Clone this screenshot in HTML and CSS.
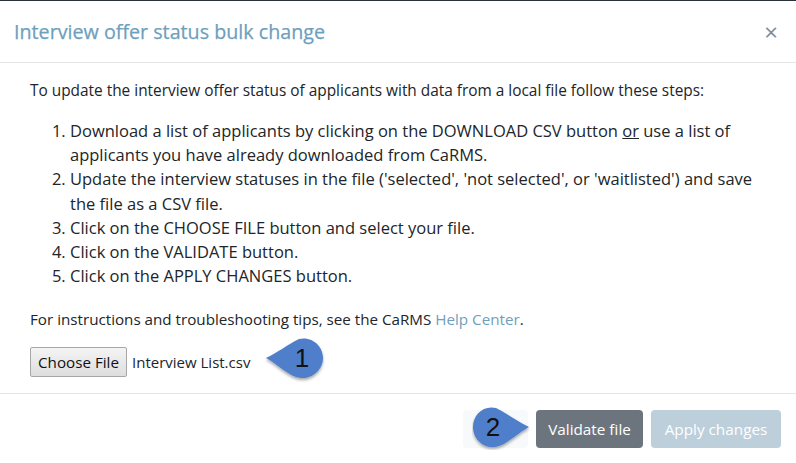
FILE: index.html
```html
<!DOCTYPE html>
<html>
<head>
    <title>Interview offer status bulk change</title>
    <link rel="stylesheet" href="styles.css">
</head>
<body>
    <div class="modal">
        <div class="modal-header">
            <h4 class="modal-title">Interview offer status bulk change</h4>
            <span class="close">&times;</span>
        </div>
        <div class="modal-body">
            <p class="intro">To update the interview offer status of applicants with data from a local file follow these steps:</p>
            <ol class="steps">
                <li>Download a list of applicants by clicking on the DOWNLOAD CSV button <u>or</u> use a list of applicants you have already downloaded from CaRMS.</li>
                <li>Update the interview statuses in the file ('selected', 'not selected', or 'waitlisted') and save the file as a CSV file.</li>
                <li>Click on the CHOOSE FILE button and select your file.</li>
                <li>Click on the VALIDATE button.</li>
                <li>Click on the APPLY CHANGES button.</li>
            </ol>
            <p class="help">For instructions and troubleshooting tips, see the CaRMS <a href="#">Help Center</a>.</p>
            <div class="file-row">
                <button class="file-btn">Choose File</button>
                <span class="file-name">Interview List.csv</span>
                <svg class="callout" width="60" height="46" viewBox="0 0 60 46">
                    <defs>
                        <filter id="sh1" x="-20%" y="-20%" width="140%" height="150%">
                            <feDropShadow dx="0" dy="2" stdDeviation="1.5" flood-color="#000" flood-opacity="0.35"/>
                        </filter>
                    </defs>
                    <path d="M1 21 C12 16 22 8 34 2 C47 -1 58 9 58 21 C58 33 47 42 36 41 C24 40 14 28 1 21 Z" fill="#4f7fca" filter="url(#sh1)"/>
                    <text x="37" y="30" class="callout-num">1</text>
                </svg>
            </div>
        </div>
        <div class="modal-footer">
            <div class="ghost">
                <svg class="callout callout-2" width="60" height="46" viewBox="0 0 60 46">
                    <defs>
                        <filter id="sh2" x="-20%" y="-20%" width="140%" height="150%">
                            <feDropShadow dx="0" dy="2" stdDeviation="1.5" flood-color="#000" flood-opacity="0.35"/>
                        </filter>
                    </defs>
                    <path d="M57 23 C46 18 36 10 24 4 C11 1 1 11 1 23 C1 35 11 44 22 43 C34 42 44 30 57 23 Z" fill="#4f7fca" filter="url(#sh2)"/>
                    <text x="21" y="32" class="callout-num">2</text>
                </svg>
            </div>
            <button class="btn btn-secondary">Validate file</button>
            <button class="btn btn-disabled">Apply changes</button>
        </div>
    </div>
</body>
</html>
```

FILE: styles.css
```css
body { margin: 0; background: #263238; font-family: "Open Sans", "Noto Sans", sans-serif; color: #212529; }
.modal { margin-top: 1px; background: #fff; width: 796px; height: 462px; }
.modal-header { display: flex; align-items: center; justify-content: space-between; padding: 15px 15px 15px 14px; border-bottom: 1px solid #e5e5e5; height: 31px; }
.modal-title { margin: 0; font-size: 19.7px; font-weight: 400; color: #6e9fbd; line-height: 30px; -webkit-text-stroke: 0.25px #6e9fbd; }
.close { font-size: 24px; color: #8a8a8a; line-height: 1; margin-right: 3px; }
.modal-body { padding: 16px 30px 16px 30px; }
.intro, .help { margin: 0; font-size: 15.4px; line-height: 24px; }
.steps { margin: 16px 0 0 0; padding-left: 40px; font-size: 16.5px; line-height: 24.2px; }
.help { margin-top: 19px; font-size: 15.2px; }
.help a { color: #6e9fbd; text-decoration: none; }
.file-row { display: flex; align-items: center; margin-top: 16px; height: 30px; }
.file-btn { font-family: "Open Sans", sans-serif; font-size: 15.2px; color: #111; width: 97px; height: 30px; padding: 0; white-space: nowrap; border: 1px solid #a7a7a7; border-radius: 2px; background: linear-gradient(#f4f4f4, #dedede); }
.file-name { font-size: 15px; margin-left: 5px; }
.callout { margin-left: 15px; margin-top: -4px; }
.callout-num { font-family: "Liberation Sans", Arial, sans-serif; font-size: 26px; fill: #111; text-anchor: middle; }
.modal-footer { display: flex; justify-content: flex-end; align-items: center; gap: 8px; border-top: 1px solid #e5e5e5; padding: 16px 15px; }
.ghost { position: relative; width: 65px; height: 38px; background: #f8f9fa; border-radius: 4px; }
.callout-2 { position: absolute; left: 9px; top: -6px; margin: 0; }
.btn { font-family: "Open Sans", sans-serif; font-size: 15.3px; height: 38px; padding: 0; white-space: nowrap; border: none; border-radius: 4px; color: #fff; }
.btn-secondary { background: #6c757d; width: 107px; }
.btn-disabled { background: #bccfdb; width: 130px; }
```
